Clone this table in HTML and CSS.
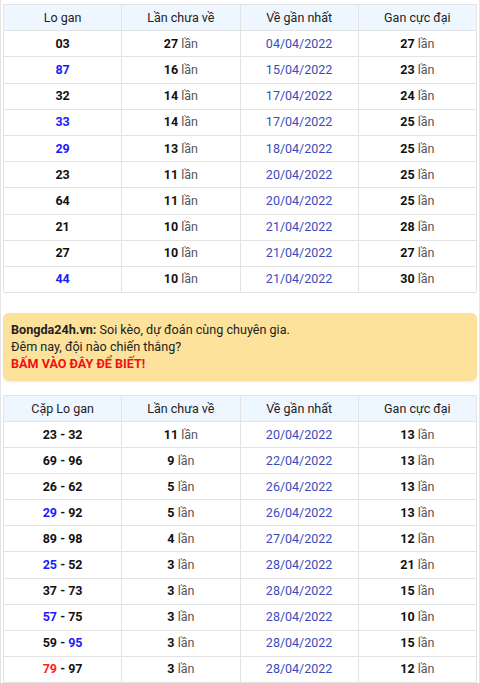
FILE: index.html
```html
<!DOCTYPE html>
<html lang="vi">
<head>
<meta charset="utf-8">
<link rel="stylesheet" href="styles.css">
</head>
<body>
<div class="page">
  <table class="stat">
    <thead>
      <tr><th>Lo gan</th><th>Lần chưa về</th><th>Về gần nhất</th><th>Gan cực đại</th></tr>
    </thead>
    <tbody>
      <tr><td><b>03</b></td><td><b>27</b> lần</td><td class="date">04/04/2022</td><td><b>27</b> lần</td></tr>
      <tr><td><b class="blue">87</b></td><td><b>16</b> lần</td><td class="date">15/04/2022</td><td><b>23</b> lần</td></tr>
      <tr><td><b>32</b></td><td><b>14</b> lần</td><td class="date">17/04/2022</td><td><b>24</b> lần</td></tr>
      <tr><td><b class="blue">33</b></td><td><b>14</b> lần</td><td class="date">17/04/2022</td><td><b>25</b> lần</td></tr>
      <tr><td><b class="blue">29</b></td><td><b>13</b> lần</td><td class="date">18/04/2022</td><td><b>25</b> lần</td></tr>
      <tr><td><b>23</b></td><td><b>11</b> lần</td><td class="date">20/04/2022</td><td><b>25</b> lần</td></tr>
      <tr><td><b>64</b></td><td><b>11</b> lần</td><td class="date">20/04/2022</td><td><b>25</b> lần</td></tr>
      <tr><td><b>21</b></td><td><b>10</b> lần</td><td class="date">21/04/2022</td><td><b>28</b> lần</td></tr>
      <tr><td><b>27</b></td><td><b>10</b> lần</td><td class="date">21/04/2022</td><td><b>27</b> lần</td></tr>
      <tr><td><b class="blue">44</b></td><td><b>10</b> lần</td><td class="date">21/04/2022</td><td><b>30</b> lần</td></tr>
    </tbody>
  </table>

  <div class="promo">
    <b>Bongda24h.vn:</b> Soi kèo, dự đoán cùng chuyên gia.<br>
    Đêm nay, đội nào chiến thắng?<br>
    <a class="cta" href="#">BẤM VÀO ĐÂY ĐỂ BIẾT!</a>
  </div>

  <table class="stat second">
    <thead>
      <tr><th>Cặp Lo gan</th><th>Lần chưa về</th><th>Về gần nhất</th><th>Gan cực đại</th></tr>
    </thead>
    <tbody>
      <tr><td><b>23 - 32</b></td><td><b>11</b> lần</td><td class="date">20/04/2022</td><td><b>13</b> lần</td></tr>
      <tr><td><b>69 - 96</b></td><td><b>9</b> lần</td><td class="date">22/04/2022</td><td><b>13</b> lần</td></tr>
      <tr><td><b>26 - 62</b></td><td><b>5</b> lần</td><td class="date">26/04/2022</td><td><b>13</b> lần</td></tr>
      <tr><td><b><span class="blue">29</span> - 92</b></td><td><b>5</b> lần</td><td class="date">26/04/2022</td><td><b>13</b> lần</td></tr>
      <tr><td><b>89 - 98</b></td><td><b>4</b> lần</td><td class="date">27/04/2022</td><td><b>12</b> lần</td></tr>
      <tr><td><b><span class="blue">25</span> - 52</b></td><td><b>3</b> lần</td><td class="date">28/04/2022</td><td><b>21</b> lần</td></tr>
      <tr><td><b>37 - 73</b></td><td><b>3</b> lần</td><td class="date">28/04/2022</td><td><b>15</b> lần</td></tr>
      <tr><td><b><span class="blue">57</span> - 75</b></td><td><b>3</b> lần</td><td class="date">28/04/2022</td><td><b>10</b> lần</td></tr>
      <tr><td><b>59 - <span class="blue">95</span></b></td><td><b>3</b> lần</td><td class="date">28/04/2022</td><td><b>15</b> lần</td></tr>
      <tr><td><b><span class="red">79</span> - 97</b></td><td><b>3</b> lần</td><td class="date">28/04/2022</td><td><b>12</b> lần</td></tr>
    </tbody>
  </table>
</div>
</body>
</html>
```

FILE: styles.css
```css
html, body {
  margin: 0;
  padding: 0;
  background: #ffffff;
}

body {
  font-family: Roboto, "Liberation Sans", Arial, sans-serif;
  font-size: 12.5px;
  color: #222222;
}

.page {
  width: 480px;
  min-height: 683px;
  border-left: 1px solid #e4e4e4;
  border-right: 1px solid #e4e4e4;
  padding: 4px 2px 0 2px;
  box-sizing: border-box;
}

.stat {
  width: 100%;
  border-collapse: collapse;
  table-layout: fixed;
  border: 1px solid #e3e3e3;
}

.stat th,
.stat td {
  border: 1px solid #e3e3e3;
  text-align: center;
  height: 25.2px;
  padding: 0;
  line-height: 16px;
}

.stat.second td {
  height: 25.05px;
}

.stat th {
  font-weight: normal;
  background: #eef6ff;
  color: #222222;
}

.stat td {
  color: #555555;
}

.stat td b {
  color: #111111;
  font-weight: 700;
}

.stat td b .blue,
.stat td b.blue {
  color: #1a1aff;
}

.stat td b .red {
  color: #ff2020;
}

.stat td.date {
  color: #3a4cbc;
}

.promo {
  margin: 20px 0 14px 0;
  background: #fde29c;
  border-radius: 6px;
  padding: 8px 8px 9px 8px;
  line-height: 17px;
  font-size: 12.6px;
  color: #222222;
  box-shadow: 0 1px 2px rgba(0, 0, 0, 0.08);
}

.promo b {
  color: #222222;
}

.promo .cta {
  color: #f01010;
  font-weight: 700;
  text-decoration: none;
}
```
